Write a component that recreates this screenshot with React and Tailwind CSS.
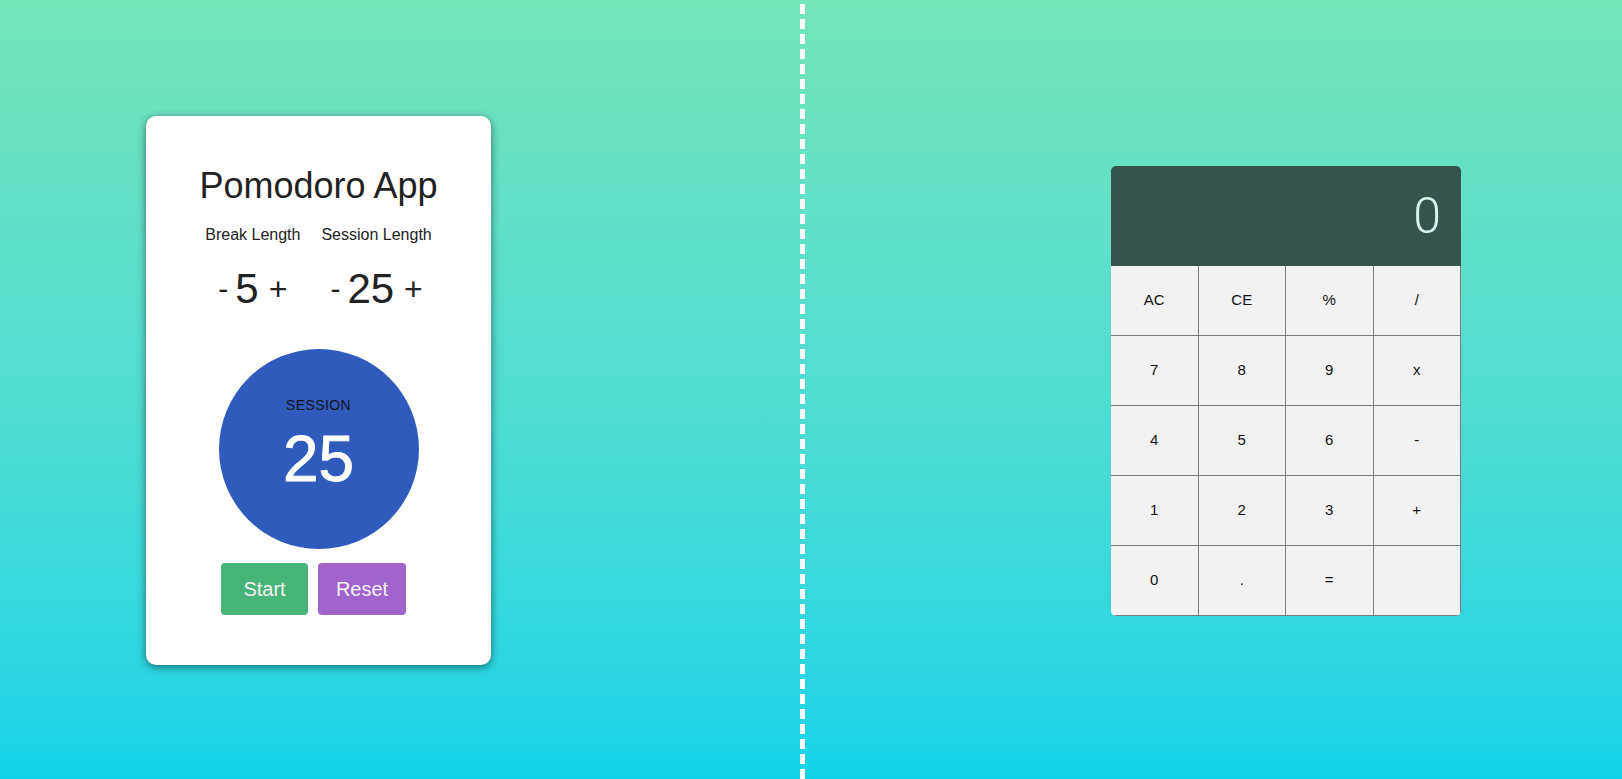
import React from 'react';

const keys = ['AC', 'CE', '%', '/', '7', '8', '9', 'x', '4', '5', '6', '-', '1', '2', '3', '+', '0', '.', '=', ''];

const Counter = ({ label, value }) => (
  <div className="flex flex-col items-center">
    <div className="text-[16px] leading-[20px] text-[#222]">{label}</div>
    <div className="mt-[20px] flex items-center">
      <button className="text-[30px] leading-[36px] text-[#222]">-</button>
      <span className="ml-[7px] text-[42px] leading-[48px] text-[#222]">{value}</span>
      <button className="ml-[10px] text-[32px] leading-[36px] text-[#222]">+</button>
    </div>
  </div>
);

const Pomodoro = () => (
  <div className="flex h-[549px] w-[345px] flex-col items-center rounded-[10px] bg-white pt-[50px] shadow-[0_2px_9px_rgba(0,0,0,0.5)]">
    <h1 className="text-[36px] leading-[40px] text-[#222]">Pomodoro App</h1>
    <div className="mt-[19px] flex gap-[21px]">
      <Counter label="Break Length" value={5} />
      <Counter label="Session Length" value={25} />
    </div>
    <div className="mt-[36px] flex h-[200px] w-[200px] flex-col items-center rounded-full bg-[#2f5bbd] pt-[48px]">
      <div className="text-[14px] leading-[16px] tracking-[0.4px] text-[#161616]">SESSION</div>
      <div className="mt-[14px] text-[64px] leading-[64px] text-white [-webkit-text-stroke:0.8px_white]">25</div>
    </div>
    <div className="mt-[14px] flex gap-[10px] pr-[10px]">
      <button className="h-[52px] w-[87px] rounded-[4px] bg-[#49b47a] text-[20px] text-[#f2f2f2]">Start</button>
      <button className="h-[52px] w-[88px] rounded-[4px] bg-[#a264cc] text-[20px] text-[#f2f2f2]">Reset</button>
    </div>
  </div>
);

const Calculator = () => (
  <div className="w-[350px] overflow-hidden rounded-[5px]">
    <div className="flex h-[100px] items-center justify-end bg-[#36534c] pr-[20px]">
      <span className="font-['Roboto',sans-serif] text-[50px] font-light leading-[50px] text-[#d5f5ec]">0</span>
    </div>
    <div className="grid grid-cols-4">
      {keys.map((k, i) => (
        <button
          key={i}
          className="flex h-[70px] items-center justify-center border-r border-b border-[#7a7a7a] bg-[#f2f2f2] text-[15px] text-[#111]"
        >
          {k}
        </button>
      ))}
    </div>
  </div>
);

export default function App() {
  return (
    <div className="flex h-screen w-full bg-linear-to-b from-[#73e5b8] to-[#0fd3e8] font-['Liberation_Sans',Arial,sans-serif]">
      <div className="flex w-[800px] items-center pl-[146px] pt-[2px]">
        <Pomodoro />
      </div>
      <div className="h-full w-[5px] bg-[repeating-linear-gradient(to_bottom,transparent_0px,transparent_4px,#ffffff_4px,#ffffff_14px,transparent_14px,transparent_15px)]" />
      <div className="flex flex-1 items-center pl-[306px] pt-[2px]">
        <Calculator />
      </div>
    </div>
  );
}
